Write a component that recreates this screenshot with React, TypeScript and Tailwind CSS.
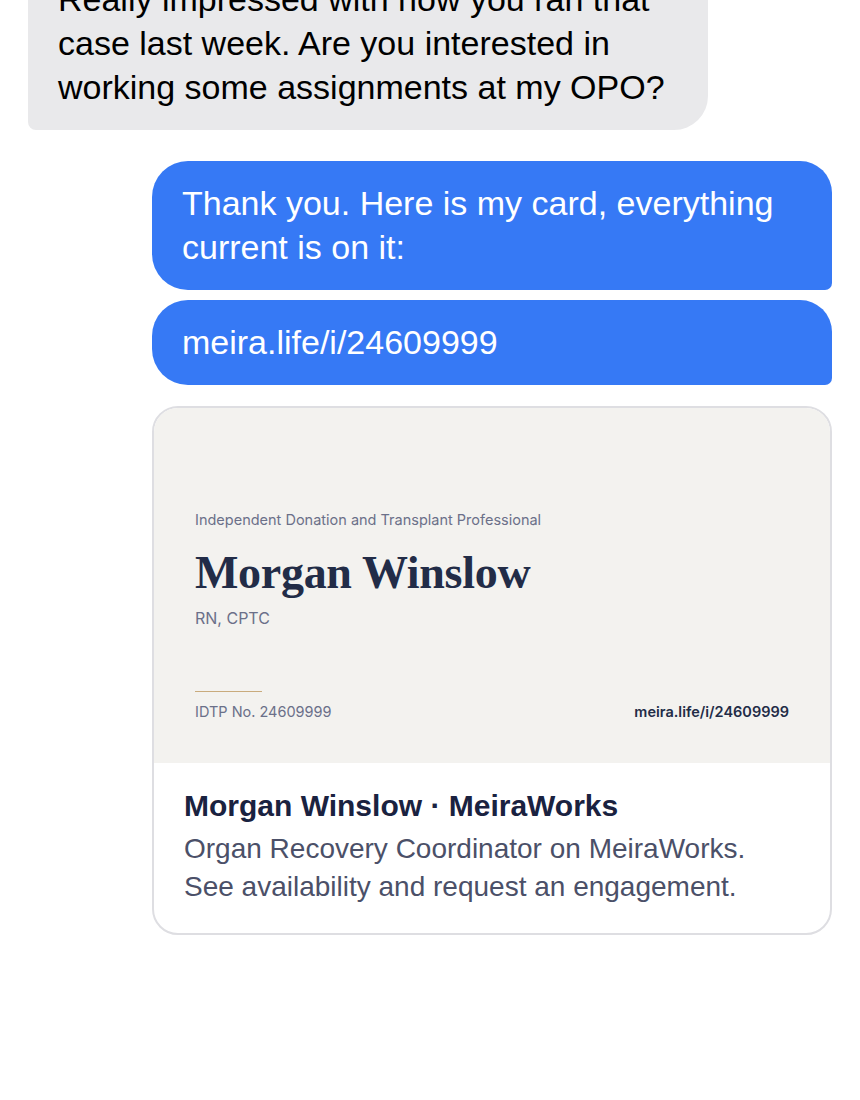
import React from 'react';

const sans = { fontFamily: '"Liberation Sans", Arial, sans-serif' };

function Incoming({ children }: { children: React.ReactNode }) {
  return (
    <div
      className="self-start w-[680px] bg-[#e9e9eb] text-black text-[34px] leading-[44px] pl-[30px] pr-[24px] pt-[20px] pb-[21px] rounded-tl-[34px] rounded-tr-[34px] rounded-br-[34px] rounded-bl-[8px]"
      style={sans}
    >
      {children}
    </div>
  );
}

function Outgoing({ children }: { children: React.ReactNode }) {
  return (
    <div
      className="self-end w-[680px] bg-[#3679f5] text-white text-[34px] leading-[44px] pl-[30px] pr-[24px] pt-[20px] pb-[21px] rounded-tl-[36px] rounded-bl-[36px] rounded-tr-[32px] rounded-br-[7px]"
      style={sans}
    >
      {children}
    </div>
  );
}

function LinkPreview() {
  return (
    <div className="self-end w-[680px] border-2 border-[#dedee2] rounded-[26px] overflow-hidden bg-white">
      {/* og image */}
      <div
        className="h-[355px] bg-[#f3f2ef] flex flex-col px-[41px] pt-[102px] pb-[41px]"
        style={{ fontFamily: 'Inter, "Noto Sans", sans-serif' }}
      >
        <div className="text-[14.5px] leading-[20px] text-[#6b7089]">
          Independent Donation and Transplant Professional
        </div>
        <div
          className="mt-[15px] text-[46px] leading-[56px] font-bold text-[#222c47] tracking-[-0.3px]"
          style={{ fontFamily: '"Liberation Serif", "Times New Roman", serif' }}
        >
          Morgan Winslow
        </div>
        <div className="mt-[6px] text-[16px] leading-[22px] text-[#6b7089]">RN, CPTC</div>
        <div className="mt-[62px] w-[67px] h-px bg-[#c9ab7d]" />
        <div className="mt-[10px] flex justify-between items-center text-[14.5px] leading-[20px]">
          <span className="text-[#6b7089]">IDTP No. 24609999</span>
          <span className="font-semibold text-[#222c47]">meira.life/i/24609999</span>
        </div>
      </div>
      <div className="px-[30px] pt-[25px] pb-[27px]" style={sans}>
        <div className="text-[30px] leading-[36px] font-bold text-[#1a2240]">
          Morgan Winslow · MeiraWorks
        </div>
        <div className="mt-[6px] text-[28px] leading-[38px] text-[#4b5068]">
          Organ Recovery Coordinator on MeiraWorks.
          <br />
          See availability and request an engagement.
        </div>
      </div>
    </div>
  );
}

export default function App() {
  return (
    <div className="h-[1100px] w-[860px] overflow-hidden bg-white">
      <div className="-mt-[43px] flex flex-col px-[28px]">
        <Incoming>
          Really impressed with how you ran that case last week. Are you interested in working some
          assignments at my OPO?
        </Incoming>
        <div className="mt-[31px] flex flex-col gap-[10px]">
          <Outgoing>Thank you. Here is my card, everything current is on it:</Outgoing>
          <Outgoing>meira.life/i/24609999</Outgoing>
        </div>
        <div className="mt-[21px] flex flex-col">
          <LinkPreview />
        </div>
      </div>
    </div>
  );
}
